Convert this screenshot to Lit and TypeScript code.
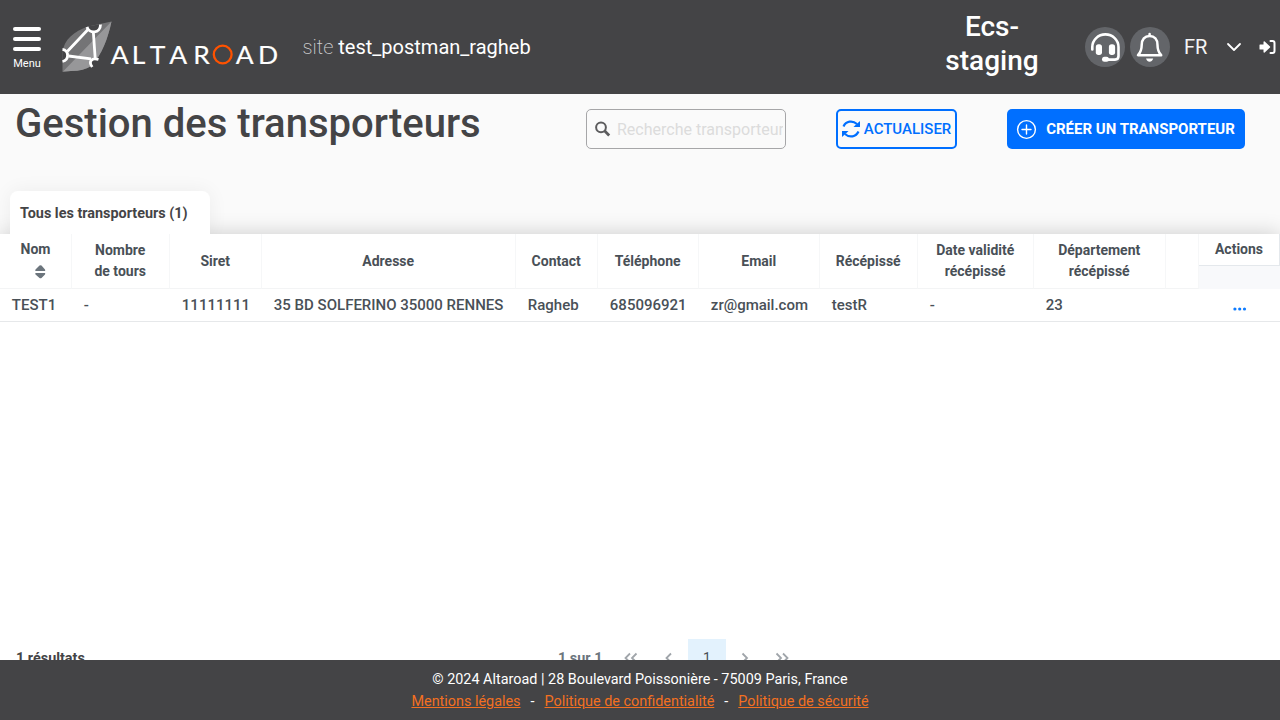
import { LitElement, html, css } from "lit";
import { customElement } from "lit/decorators.js";

interface Column {
  title: string[];
  value: string;
  sortable?: boolean;
}

const columns: Column[] = [
  { title: ["Nom"], value: "TEST1", sortable: true },
  { title: ["Nombre", "de tours"], value: "-" },
  { title: ["Siret"], value: "11111111" },
  { title: ["Adresse"], value: "35 BD SOLFERINO 35000 RENNES" },
  { title: ["Contact"], value: "Ragheb" },
  { title: ["Téléphone"], value: "685096921" },
  { title: ["Email"], value: "zr@gmail.com" },
  { title: ["Récépissé"], value: "testR" },
  { title: ["Date validité", "récépissé"], value: "-" },
  { title: ["Département", "récépissé"], value: "23" },
  { title: [], value: "" },
];

@customElement("app-header")
export class AppHeader extends LitElement {
  static styles = css`
    :host {
      display: flex;
      align-items: center;
      height: 94px;
      background: #444446;
      color: #fff;
      font-family: Roboto, sans-serif;
      flex: none;
    }
    .menu {
      display: flex;
      flex-direction: column;
      align-items: center;
      width: 28px;
      margin-left: 13px;
      padding-top: 4px;
      font-size: 11px;
      line-height: 15px;
    }
    .bars {
      display: grid;
      gap: 6px;
      width: 28px;
      margin-bottom: 5px;
    }
    .bars i {
      height: 4px;
      border-radius: 2px;
      background: #fff;
    }
    .logo {
      display: block;
      margin-left: 20px;
    }
    .wordmark {
      font: 400 24.500px Lato, sans-serif;
      fill: #fff;
      stroke: #fff;
      stroke-width: 0.150px;
    }
    .site {
      margin-left: 21.500px;
      font-size: 20px;
      white-space: nowrap;
    }
    .site span {
      font-weight: 200;
      color: #d0d0d2;
    }
    .env {
      width: 110px;
      margin-left: auto;
      margin-right: 38px;
      padding-bottom: 7px;
      font-size: 28px;
      font-weight: 500;
      line-height: 34px;
      text-align: center;
    }
    .round {
      display: block;
      width: 40px;
      height: 40px;
      margin-right: 5px;
      border-radius: 50%;
      background: #636569;
    }
    .lang {
      width: 42px;
      margin-left: 9px;
      font-size: 20px;
      font-weight: 400;
      color: #f4f4f4;
    }
    .logout {
      margin-left: 16.500px;
      margin-right: 4.500px;
    }
  `;

  render() {
    return html`
      <div class="menu">
        <div class="bars"><i></i><i></i><i></i></div>
        Menu
      </div>
      <svg class="logo" width="220" height="60" viewBox="61 17 220 60">
        <path d="M62.500 72V52C64 40 74 31 88 26.500Q100 24 111.500 21.500C108 38 102 55 91 66Q84 71 71 71Z" fill="#747476" />
        <path d="M63 71.500L111.500 21.500C108 38 102 55 91 66Q84 71 71 71Z" fill="#979799" />
        <path d="M62.500 49.500C69 50 69.500 60 62.500 61.500ZM88 26.500C89 33.500 100.500 34 101 24ZM98 58.500C91 57 88 62 92 66.500Q96 62 98 58.500Z" fill="#444446" />
        <g fill="none" stroke="#fff" stroke-width="2.800">
          <path d="M67.500 51.200L88 29.500M93.300 31.500L95.200 58.500M68.500 56L91 58.800" />
          <path d="M87 27C89 34 100.500 34 100.500 24.500M62.500 49.500C69 50 69.500 60 62.500 61.500M98.500 59.500C92 57.500 88 61 92.200 67" />
        </g>
        <g transform="translate(0 63.500) scale(1.080 1.040)">
          <text class="wordmark" x="102.600 122.100 138.600 156.700 178.900">ALTAR</text>
          <text class="wordmark" x="218.200 238.900">AD</text>
        </g>
        <circle cx="222.700" cy="54.500" r="8.900" fill="none" stroke="#ff5200" stroke-width="2.300" />
      </svg>
      <div class="site"><span>site</span> test_postman_ragheb</div>
      <div class="env">Ecs-<br />staging</div>
      <svg class="round" viewBox="0 0 40 40" fill="none" stroke="#fff">
        <path d="M7.300 22.500V20A13.100 12.600 0 0 1 33.500 20V29Q33.500 32.600 30 32.600H21" stroke-width="2.600" stroke-linecap="round" />
        <g fill="#fff" stroke="none">
          <rect x="10.800" y="17.200" width="6.200" height="10.800" rx="2.700" />
          <rect x="23.900" y="17.200" width="6.200" height="10.800" rx="2.700" />
          <rect x="17" y="29.800" width="7" height="5" rx="2.500" />
        </g>
      </svg>
      <svg class="round" viewBox="0 0 40 40" fill="none" stroke="#fff" stroke-width="2.500">
        <path d="M8 28.200H31.200C28.500 25.500 27.500 23.500 27.500 18C27.500 12.500 24.500 9 19.600 9S11.700 12.500 11.700 18C11.700 23.500 10.500 25.500 8 28.200ZM19.600 9V7" stroke-linejoin="round" stroke-linecap="round" />
        <path d="M16 31.500H23.200Q22 34.700 19.600 34.700T16 31.500Z" fill="#fff" stroke="none" />
      </svg>
      <div class="lang">FR</div>
      <svg width="16" height="16" viewBox="0 0 16 16" fill="none" stroke="#fff" stroke-width="1.800" stroke-linecap="round" stroke-linejoin="round">
        <path d="M2 5L8 11L14 5" />
      </svg>
      <svg class="logout" width="17" height="16" viewBox="0 0 17 16">
        <path d="M0.500 6Q0.500 5.500 1 5.500H4.500V3Q4.700 2 5.700 2.500L11 7.500Q11.500 8 11 8.500L5.700 13.500Q4.700 14 4.500 13V10.500H1Q0.500 10.500 0.500 10Z" fill="#fff" />
        <path d="M11.500 2H13.500Q15.500 2 15.500 4V12Q15.500 14 13.500 14H11.500" fill="none" stroke="#fff" stroke-width="2" stroke-linecap="round" />
      </svg>
    `;
  }
}

@customElement("carrier-table")
export class CarrierTable extends LitElement {
  static styles = css`
    :host {
      display: block;
      background: #fff;
      color: #495057;
      flex: 1;
    }
    .grid {
      display: grid;
      grid-template-columns: 72px 98px 92px 254px 82px 101px 121px 98px 116px 132px 33px 81px;
      grid-template-rows: 55px 33px;
    }
    .head {
      display: flex;
      flex-direction: column;
      align-items: center;
      justify-content: center;
      box-sizing: border-box;
      padding-right: 0.600px;
      border-right: 1px solid #f6f7f8;
      border-bottom: 1px solid #f3f4f5;
      font-size: 14px;
      font-weight: 700;
      line-height: 21px;
      white-space: nowrap;
    }
    .sort {
      margin: 0 0 0 9px;
    }
    .head.sorted {
      padding: 0 0 2px;
    }
    .head.actions {
      justify-content: flex-start;
      padding: 0;
      border: 0;
      background: #f8f9fb;
    }
    .actions span {
      width: 100%;
      box-sizing: border-box;
      height: 32px;
      padding-top: 5px;
      background: #fff;
      text-align: center;
      border-bottom: 1px solid #e4e8ec;
      border-right: 1px solid #e4e8ec;
    }
    .cell {
      box-sizing: border-box;
      padding-left: 11.850px;
      border-bottom: 1px solid #e6e8ea;
      font-size: 15px;
      font-weight: 500;
      line-height: 33px;
      white-space: nowrap;
    }
    .more {
      display: flex;
      align-items: center;
      justify-content: center;
      padding: 7px 0 0;
    }
  `;

  render() {
    return html`
      <div class="grid">
        ${columns.map(
          (c) => html`<div class="head ${c.sortable ? "sorted" : ""}">
            ${c.title.map((line) => html`<span>${line}</span>`)}
            ${c.sortable
              ? html`<svg class="sort" width="11" height="22" viewBox="0 0 11 22" fill="#6c757d">
                  <path d="M0.500 11Q0 10.500 0.500 9.500L4.500 5.500Q5.500 4.800 6.500 5.500L10 9.500Q10.500 10.500 10 11ZM0.500 13Q0 13.500 0.500 14.500L4.500 18Q5.500 18.700 6.500 18L10 14.500Q10.500 13.500 10 13Z" />
                </svg>`
              : ""}
          </div>`
        )}
        <div class="head actions"><span>Actions</span></div>
        ${columns.map((c) => html`<div class="cell">${c.value}</div>`)}
        <div class="cell more">
          <svg width="14" height="4" viewBox="0 0 14 4" fill="#0d7bff">
            <circle cx="1.900" cy="2" r="1.600" /><circle cx="6.700" cy="2" r="1.600" /><circle cx="11.500" cy="2" r="1.600" />
          </svg>
        </div>
      </div>
    `;
  }
}

@customElement("app-root")
export class AppRoot extends LitElement {
  static styles = css`
    :host {
      display: flex;
      flex-direction: column;
      height: 720px;
      overflow: hidden;
      background: #fafafa;
      color: #444446;
      font-family: Roboto, sans-serif;
    }
    .toolbar {
      display: flex;
      height: 97px;
      padding-left: 15px;
      flex: none;
    }
    h1 {
      width: 571px;
      margin: 6px 0 0;
      font-size: 40.040px;
      font-weight: 500;
      line-height: 48px;
      white-space: nowrap;
    }
    .search,
    .btn {
      display: flex;
      align-items: center;
      box-sizing: border-box;
      height: 40px;
      margin-top: 15px;
      border-radius: 5px;
      white-space: nowrap;
    }
    .search {
      width: 200px;
      padding-left: 8px;
      border: 1px solid #a6a6a8;
      font-size: 16px;
      color: #dcdcdc;
    }
    .search span {
      width: 166px;
      margin-left: 6px;
      overflow: hidden;
    }
    .refresh {
      width: 121px;
      margin-left: 50px;
      padding-left: 4px;
      border: 2px solid #006fff;
      color: #006fff;
      font-size: 15px;
      font-weight: 500;
      gap: 3.800px;
    }
    .create {
      width: 238px;
      margin-left: 50px;
      padding-left: 9px;
      background: #006fff;
      color: #fff;
      font-size: 15px;
      font-weight: 700;
      gap: 9.200px;
    }
    .tab {
      position: relative;
      z-index: 1;
      clip-path: inset(-24px -24px 0 -24px);
      box-sizing: border-box;
      width: 200px;
      height: 43px;
      margin-left: 10px;
      padding-left: 10px;
      border-radius: 8px 8px 0 0;
      background: #fff;
      box-shadow: 0 0 20px rgba(0, 0, 0, 0.06);
      font-size: 14.400px;
      font-weight: 700;
      line-height: 45px;
      flex: none;
    }
    .panel {
      display: flex;
      flex-direction: column;
      flex: none;
      height: 405px;
      box-shadow: 0 0 20px rgba(0, 0, 0, 0.19);
    }
    .pager {
      display: flex;
      height: 21px;
      background: #fff;
      font-size: 14px;
      line-height: 39px;
      flex: none;
    }
    .results {
      width: 542px;
      padding-left: 16px;
      font-weight: 700;
      font-size: 14.400px;
    }
    .count {
      width: 54px;
      font-weight: 700;
      color: #6c757d;
      font-size: 14.400px;
    }
    .pager svg {
      display: block;
      flex: none;
    }
    .page {
      width: 38px;
      background: #e3f2fd;
      color: #495057;
      text-align: center;
    }
    footer {
      position: relative;
      height: 60px;
      box-sizing: border-box;
      padding-top: 9px;
      background: #444446;
      color: #fff;
      font-size: 14.400px;
      line-height: 22px;
      text-align: center;
      flex: none;
      z-index: 2;
    }
    .links {
      display: flex;
      justify-content: center;
      gap: 10px;
    }
    footer a {
      color: #f37021;
      text-decoration: underline;
    }
  `;

  private arrow(d: string) {
    return html`<svg width="38" height="38" viewBox="0 0 38 38" fill="none" stroke="#a0a5aa" stroke-width="1.800">
      <path d=${d} />
    </svg>`;
  }

  render() {
    return html`
      <app-header></app-header>
      <div class="toolbar">
        <h1>Gestion des transporteurs</h1>
        <div class="search">
          <svg width="16" height="16" viewBox="0 0 16 16" fill="none" stroke="#5c5c5e">
            <circle cx="6" cy="6.300" r="4.900" stroke-width="2" />
            <path d="M9.500 9.800L14.200 14.500" stroke-width="2.800" />
          </svg>
          <span>Recherche transporteur</span>
        </div>
        <div class="btn refresh">
          <svg width="18" height="18" viewBox="0 0 18 18" fill="none" stroke="#006fff" stroke-width="2.200">
            <path d="M1.500 6.500C4 1 10.500 0 15 4M16.500 11.500C14 17 7.500 18 3 14" />
            <path d="M18 1V7H11.500L13.500 5ZM0 17V11H6.500L4.500 13Z" fill="#006fff" stroke="none" />
          </svg>
          ACTUALISER
        </div>
        <div class="btn create">
          <svg width="21" height="21" viewBox="0 0 21 21" fill="none" stroke="#fff" stroke-width="1.400">
            <circle cx="10.500" cy="10.500" r="8.900" />
            <path d="M10.500 6V15M6 10.500H15" stroke-linecap="round" />
          </svg>
          CRÉER UN TRANSPORTEUR
        </div>
      </div>
      <div class="tab">Tous les transporteurs (1)</div>
      <div class="panel"><carrier-table></carrier-table></div>
      <div class="pager">
        <div class="results">1 résultats</div>
        <div class="count">1 sur 1</div>
        ${this.arrow("M18 14.500L13.500 19L18 23.500M24.500 14.500L20 19L24.500 23.500")}
        ${this.arrow("M21 14.500L16.500 19L21 23.500")}
        <div class="page">1</div>
        ${this.arrow("M16.500 14.500L21 19L16.500 23.500")}
        ${this.arrow("M12.500 14.500L17 19L12.500 23.500M19 14.500L23.500 19L19 23.500")}
      </div>
      <footer>
        <div>© 2024 Altaroad | 28 Boulevard Poissonière - 75009 Paris, France</div>
        <div class="links">
          <a>Mentions légales</a><span>-</span><a>Politique de confidentialité</a><span>-</span><a>Politique de sécurité</a>
        </div>
      </footer>
    `;
  }
}
